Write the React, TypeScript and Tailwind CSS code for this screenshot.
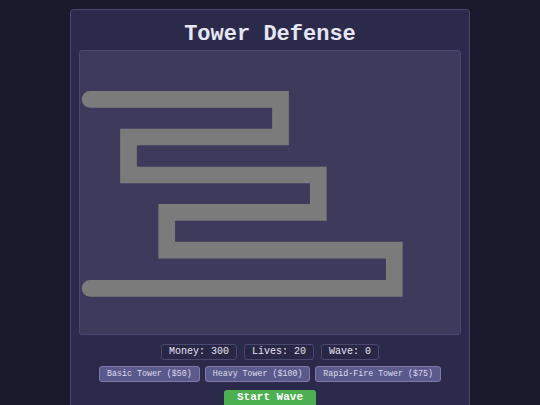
import React from "react";

const mono = { fontFamily: '"Liberation Mono", "DejaVu Sans Mono", monospace' };

function PathMap() {
  const pts =
    "10,48.3 200.5,48.3 200.5,86 48.5,86 48.5,124 238.3,124 238.3,161.3 86.7,161.3 86.7,199.2 314.3,199.2 314.3,237.3 10,237.3";
  return (
    <svg viewBox="0 0 380 283" className="block h-full w-full">
      <polyline
        points={pts}
        fill="none"
        stroke="#7b7b7b"
        strokeWidth="16.7"
        strokeLinecap="round"
        strokeLinejoin="miter"
      />
    </svg>
  );
}

function Stat({ label, value }: { label: string; value: string | number }) {
  return (
    <div className="flex h-[16px] items-center rounded-[3px] border border-[#4b4970] bg-[#292746] px-[7px] text-[10px] leading-none text-[#e4e4f0]">
      {label}: {value}
    </div>
  );
}

function TowerButton({ children }: { children: React.ReactNode }) {
  return (
    <button className="flex h-[16px] items-center rounded-[3px] border border-[#7c7aa8] bg-[#5b5a8c] px-[7px] text-[8.3px] leading-none text-[#dcdcec]">
      {children}
    </button>
  );
}

export default function App() {
  return (
    <div className="flex h-screen justify-center overflow-hidden bg-[#1b1a2c] pt-[9px]" style={mono}>
      <div className="flex h-[420px] w-[400px] flex-col items-center rounded-[4px] border border-[#4a4872] bg-[#2c2a4b] px-[8px]">
        <h1 className="flex h-[40px] items-center pt-[9px] text-[22px] font-bold text-[#e6e6f4]">
          Tower Defense
        </h1>
        <div className="h-[285px] w-[382px] rounded-[3px] border border-[#4a4872] bg-[#3d3a5c]">
          <PathMap />
        </div>
        <div className="mt-[9px] flex gap-[7px]">
          <Stat label="Money" value={300} />
          <Stat label="Lives" value={20} />
          <Stat label="Wave" value={0} />
        </div>
        <div className="mt-[6px] flex gap-[5px]">
          <TowerButton>Basic Tower ($50)</TowerButton>
          <TowerButton>Heavy Tower ($100)</TowerButton>
          <TowerButton>Rapid-Fire Tower ($75)</TowerButton>
        </div>
        <button className="mt-[8px] rounded-[3px] bg-[#4caf50] px-[13px] pb-[8px] pt-[1px] text-[11px] leading-[12px] font-bold text-white">
          Start Wave
        </button>
      </div>
    </div>
  );
}
